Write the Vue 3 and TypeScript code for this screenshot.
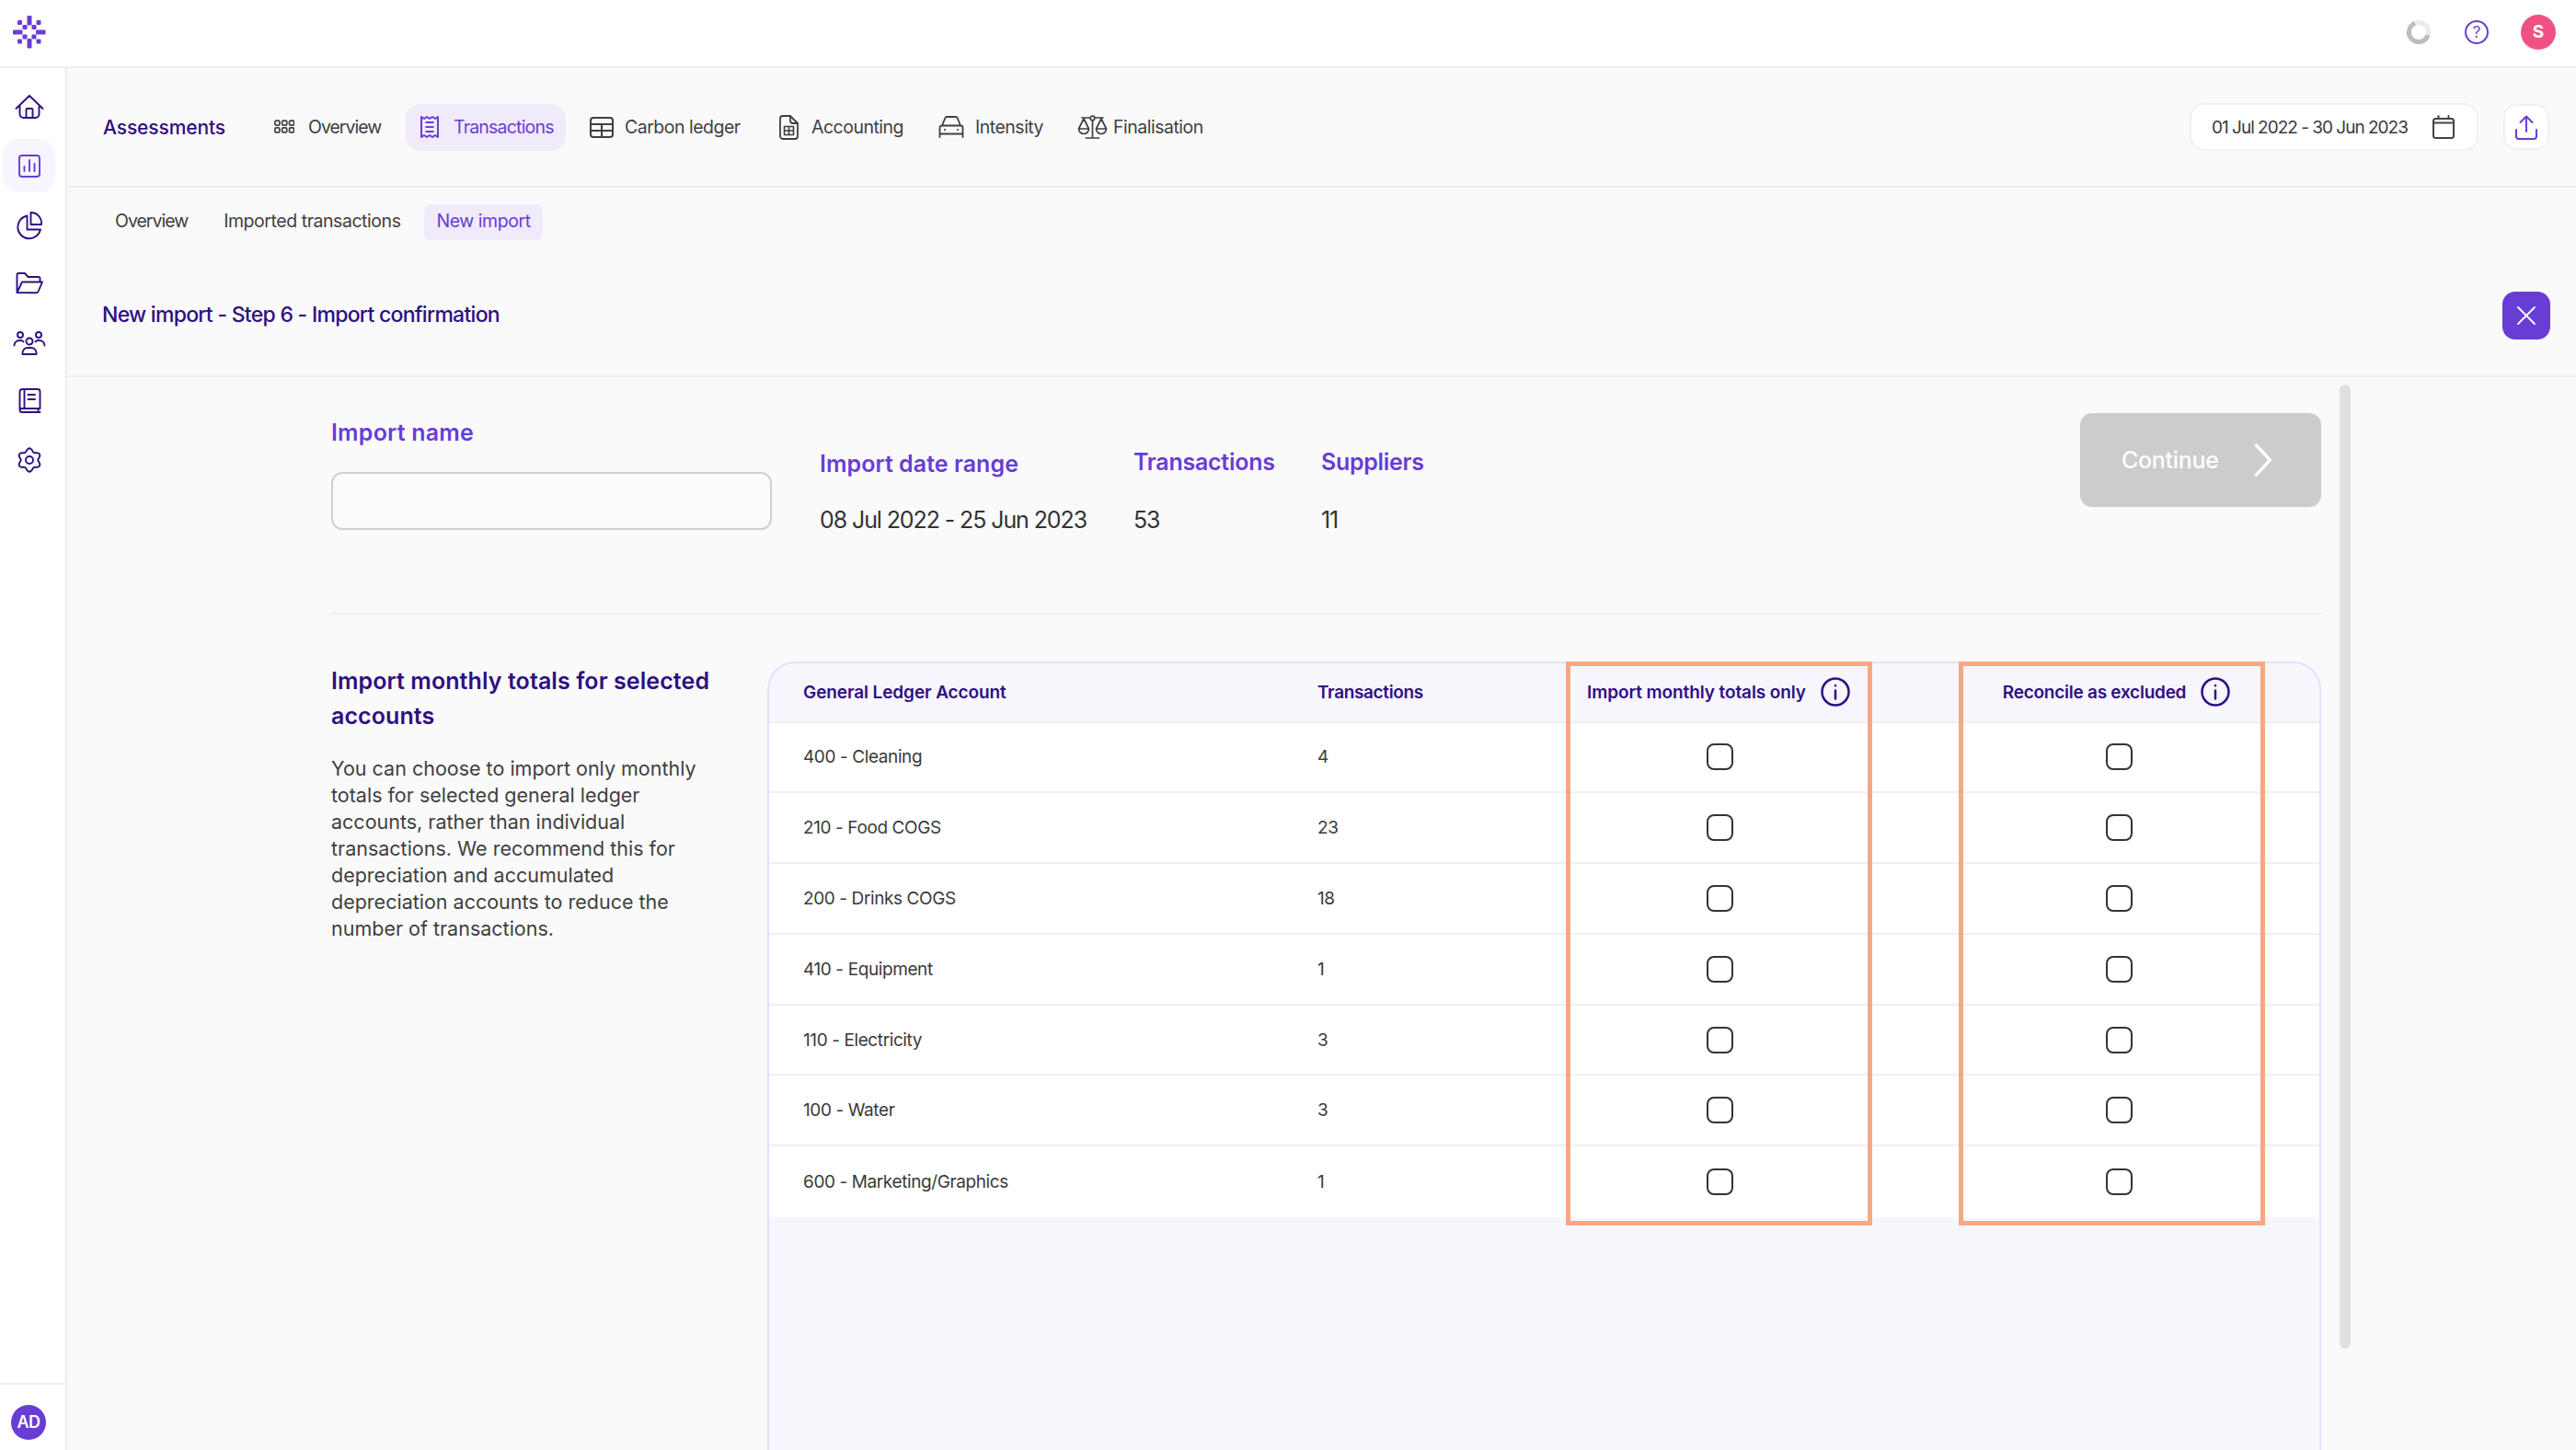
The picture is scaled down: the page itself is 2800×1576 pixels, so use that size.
<script setup lang="ts">
function gear(): string {
  const pts: string[] = []
  for (let i = 0; i < 96; i++) {
    const t = (i / 96) * Math.PI * 2
    const r = 11 - 1.7 * Math.cos(6 * t)
    pts.push(`${(18 + r * Math.cos(t)).toFixed(2)} ${(18 + r * Math.sin(t)).toFixed(2)}`)
  }
  return `M${pts.join('L')}ZM22 18a4 4 0 1 1-8 0a4 4 0 1 1 8 0Z`
}

const sideIcons = [
  { d: 'M3.5 20L18 6l14.5 14M7.5 16v10a4 4 0 0 0 4 4h13a4 4 0 0 0 4-4V16M14.5 30v-9a1 1 0 0 1 1-1h5a1 1 0 0 1 1 1v9', active: false },
  { d: 'M10 7h16a3 3 0 0 1 3 3v17a3 3 0 0 1-3 3H10a3 3 0 0 1-3-3V10a3 3 0 0 1 3-3ZM12.5 24v-5M18 24V12M23.5 24v-8', active: true },
  { d: 'M15.5 8.5A12.5 12.5 0 1 0 30 23.5H15.5ZM19.5 5A11.5 11.5 0 0 1 31 18H19.5Z', active: false },
  { d: 'M4.5 28V8.5A1.5 1.5 0 0 1 6 7h7l3.5 4H28a1.5 1.5 0 0 1 1.5 1.5V16M4.5 28L10 16.5h22L27.5 27a2 2 0 0 1-2 1.2Z', active: false },
  { d: 'M21.5 17a3.5 3.5 0 1 1-7 0a3.5 3.5 0 1 1 7 0ZM11 10a3 3 0 1 1-6 0a3 3 0 1 1 6 0ZM31 10a3 3 0 1 1-6 0a3 3 0 1 1 6 0ZM10.5 31h15v-1.5a5.5 5.5 0 0 0-5.5-5.5h-4a5.5 5.5 0 0 0-5.5 5.5ZM1.5 21.5a5.5 5.5 0 0 1 5.5-5.5h2.5l2 1.5M34.5 21.5A5.5 5.5 0 0 0 29 16h-2.5l-2 1.5', active: false },
  { d: 'M7.5 26.5V8a3 3 0 0 1 3-3H27a2.5 2.5 0 0 1 2.5 2.5V26H10a2.5 2.5 0 0 0-2.5 2A2.5 2.5 0 0 0 10 30h19.5M12.5 5v21M27.5 26v4M16.5 11H24M16.5 16H24', active: false },
  { d: gear(), active: false },
]

const rows = [
  { name: '400 - Cleaning', count: 4 },
  { name: '210 - Food COGS', count: 23 },
  { name: '200 - Drinks COGS', count: 18 },
  { name: '410 - Equipment', count: 1 },
  { name: '110 - Electricity', count: 3 },
  { name: '100 - Water', count: 3 },
  { name: '600 - Marketing/Graphics', count: 1 },
]

const overviewCells = [0, 8.5, 17].flatMap((x) => [0, 8.5].map((y) => ({ x: x + 1, y: y + 1 })))
</script>

<template>
  <div class="app">
    <header class="topbar">
      <svg class="logo" width="36" height="36" viewBox="0 0 36 36" fill="#673dd6">
        <rect x="15.5" y="0" width="5" height="10.5" rx="1" />
        <rect x="15.5" y="25" width="5" height="10.5" rx="1" />
        <rect x="0" y="15.5" width="10.5" height="5" rx="1" />
        <rect x="25" y="15.5" width="10.5" height="5" rx="1" />
        <rect x="5" y="5" width="5" height="5" rx="1" />
        <rect x="25.5" y="5" width="5" height="5" rx="1" />
        <rect x="5" y="25.5" width="5" height="5" rx="1" />
        <rect x="25.5" y="25.5" width="5" height="5" rx="1" />
        <rect x="10.5" y="10" width="5" height="5" rx="1" />
        <rect x="20.5" y="10" width="5" height="5" rx="1" />
        <rect x="10.5" y="20.5" width="5" height="5" rx="1" />
        <rect x="20.5" y="20.5" width="5" height="5" rx="1" />
      </svg>
      <div class="top-actions">
        <svg width="26" height="26" viewBox="0 0 26 26" fill="none" stroke-width="5">
          <circle cx="13" cy="13" r="10.5" stroke="#ebebeb" />
          <path d="M23 16.2A10.5 10.5 0 1 1 9 3.3" stroke="#bdbdbd" />
        </svg>
        <div class="help">?</div>
        <div class="user">S</div>
      </div>
    </header>

    <div class="body">
      <aside class="sidebar">
        <nav class="side-nav">
          <div v-for="(ic, i) in sideIcons" :key="i" class="side-item" :class="{ on: ic.active }">
            <svg width="36" height="36" viewBox="0 0 36 36" fill="none" stroke="currentColor" stroke-width="1.9" stroke-linecap="round" stroke-linejoin="round">
              <path :d="ic.d" />
            </svg>
          </div>
        </nav>
        <div class="side-foot"><div class="ad">AD</div></div>
      </aside>

      <main class="main">
        <div class="tabbar">
          <div class="brand">Assessments</div>
          <div class="tab t-overview">
            <svg width="22" height="16" viewBox="0 0 24 17" fill="none" stroke="currentColor" stroke-width="1.9">
              <rect v-for="(c, i) in overviewCells" :key="i" :x="c.x" :y="c.y" width="5.5" height="5.5" rx="1.6" />
            </svg>
            <span>Overview</span>
          </div>
          <div class="tab t-trans">
            <svg width="20" height="26" viewBox="0 0 20 26" fill="none" stroke="currentColor" stroke-width="2" stroke-linejoin="round">
              <path d="M1 2l3 2 3-2 3 2 3-2 3 2 3-2v22l-3-2-3 2-3-2-3 2-3-2-3 2ZM5.5 8h9M5.5 13h9M5.5 18h9" />
            </svg>
            <span>Transactions</span>
          </div>
          <div class="tab t-carbon">
            <svg width="26" height="23" viewBox="0 0 26 23" fill="none" stroke="currentColor" stroke-width="2">
              <rect x="1" y="1" width="24" height="21" rx="3" />
              <path d="M1 8h24M1 15h24M13 8v14" />
            </svg>
            <span>Carbon ledger</span>
          </div>
          <div class="tab t-acc">
            <svg width="21" height="27" viewBox="0 0 21 27" fill="none" stroke="currentColor" stroke-width="1.8" stroke-linejoin="round">
              <path d="M4 1h8l8 8v14a3 3 0 0 1-3 3H4a3 3 0 0 1-3-3V4a3 3 0 0 1 3-3ZM12 1v5a3 3 0 0 0 3 3h5" />
              <path d="M5.5 12.5h10v9h-10ZM5.5 17h10M10.5 12.5v9" stroke-width="1.6" />
            </svg>
            <span>Accounting</span>
          </div>
          <div class="tab t-int">
            <svg width="28" height="24" viewBox="0 0 28 24" fill="none" stroke="currentColor" stroke-width="1.8" stroke-linecap="round" stroke-linejoin="round">
              <path d="M1.5 23V12.5a2 2 0 0 1 2-2h21a2 2 0 0 1 2 2V23M1.5 19.5h25M4 10.5L7 3a2.5 2.5 0 0 1 2.3-2h9.4A2.5 2.5 0 0 1 21 3l3 7.5" />
              <path d="M7 15h.2M21 15h.2" stroke-width="2" />
            </svg>
            <span>Intensity</span>
          </div>
          <div class="tab t-fin">
            <svg width="33" height="26" viewBox="0 0 33 26" fill="none" stroke="currentColor" stroke-width="1.7" stroke-linecap="round" stroke-linejoin="round">
              <circle cx="16.5" cy="3.5" r="2.3" />
              <path d="M16.5 6v18.5M9.5 25h14M5 3h9M19 3h9M7 4L1.5 15h11ZM26 4l-5.5 11h11ZM1.5 15a5.5 5.5 0 0 0 11 0M20.5 15a5.5 5.5 0 0 0 11 0" />
            </svg>
            <span>Finalisation</span>
          </div>
          <div class="tab-right">
            <div class="date">
              <span>01 Jul 2022 - 30 Jun 2023</span>
              <svg width="24" height="26" viewBox="0 0 24 26" fill="none" stroke="#444" stroke-width="2" stroke-linecap="round">
                <rect x="1" y="4" width="22" height="21" rx="2.5" />
                <path d="M1 8.5h22M6.5 1v3M17.5 1v3" />
              </svg>
            </div>
            <div class="upload">
              <svg width="24" height="27" viewBox="0 0 24 27" fill="none" stroke="#673dd6" stroke-width="2" stroke-linecap="round" stroke-linejoin="round">
                <path d="M12 18V1.5M5.5 8L12 1.5 18.5 8M1 16v7a3 3 0 0 0 3 3h16a3 3 0 0 0 3-3v-7" />
              </svg>
            </div>
          </div>
        </div>

        <div class="subtabs">
          <div class="subtab s-ov">Overview</div>
          <div class="subtab">Imported transactions</div>
          <div class="subtab on">New import</div>
        </div>

        <div class="title-row">
          <h1>New import - Step 6 - Import confirmation</h1>
          <div class="close">
            <svg width="22" height="22" viewBox="0 0 22 22" fill="none" stroke="#fff" stroke-width="1.8" stroke-linecap="round">
              <path d="M2 2l18 18M20 2L2 20" />
            </svg>
          </div>
        </div>

        <div class="content">
          <div class="scrollthumb"></div>
          <section class="summary">
            <div class="name-col">
              <label class="label">Import name</label>
              <div class="input"></div>
            </div>
            <div class="meta m-date">
              <div class="label">Import date range</div>
              <div class="value">08 Jul 2022 - 25 Jun 2023</div>
            </div>
            <div class="meta m-tx">
              <div class="label">Transactions</div>
              <div class="value">53</div>
            </div>
            <div class="meta m-sup">
              <div class="label">Suppliers</div>
              <div class="value">11</div>
            </div>
            <div class="continue">
              <span>Continue</span>
              <svg width="20" height="36" viewBox="0 0 20 36" fill="none" stroke="#fff" stroke-width="3.4" stroke-linecap="round" stroke-linejoin="round">
                <path d="M2.5 2l15 16-15 16" />
              </svg>
            </div>
          </section>

          <section class="lower">
            <div class="intro">
              <h2>Import monthly totals for selected<br />accounts</h2>
              <p>
                You can choose to import only monthly<br />
                totals for selected general ledger<br />
                accounts, rather than individual<br />
                transactions. We recommend this for<br />
                depreciation and accumulated<br />
                depreciation accounts to reduce the<br />
                number of transactions.
              </p>
            </div>
            <div class="table">
              <div class="row head">
                <div>General Ledger Account</div>
                <div class="h-tx">Transactions</div>
                <div class="center">
                  <span>Import monthly totals only</span>
                  <svg class="info" width="32" height="32" viewBox="0 0 32 32" fill="none" stroke="currentColor" stroke-width="2.5" stroke-linecap="round">
                    <circle cx="16" cy="16" r="14.5" />
                    <path d="M16 14.5v9M16 9v.2" />
                  </svg>
                </div>
                <div class="center last">
                  <span class="h-rec">Reconcile as excluded</span>
                  <svg class="info" width="32" height="32" viewBox="0 0 32 32" fill="none" stroke="currentColor" stroke-width="2.5" stroke-linecap="round">
                    <circle cx="16" cy="16" r="14.5" />
                    <path d="M16 14.5v9M16 9v.2" />
                  </svg>
                </div>
              </div>
              <div v-for="r in rows" :key="r.name" class="row">
                <div>{{ r.name }}</div>
                <div>{{ r.count }}</div>
                <div class="center"><span class="check"></span></div>
                <div class="center last"><span class="check"></span></div>
              </div>
              <div class="mark mark-a"></div>
              <div class="mark mark-b"></div>
            </div>
          </section>
        </div>
      </main>
    </div>
  </div>
</template>

<style scoped>
.app {
  width: 2800px;
  height: 1576px;
  display: flex;
  flex-direction: column;
  overflow: hidden;
  background: #fafafa;
  font-family: Inter, "Liberation Sans", sans-serif;
  color: #3a3a3a;
}
.topbar {
  flex: none;
  height: 74px;
  box-sizing: border-box;
  background: #fff;
  border-bottom: 2px solid #eeeeee;
  display: flex;
  align-items: center;
  justify-content: space-between;
  padding: 0 22px 3px 14px;
}
.top-actions {
  display: flex;
  align-items: center;
  gap: 37px;
}
.help {
  width: 26px;
  height: 26px;
  box-sizing: border-box;
  border: 2px solid #673dd6;
  border-radius: 50%;
  color: #673dd6;
  font-size: 17px;
  line-height: 22px;
  text-align: center;
}
.user {
  width: 38px;
  height: 38px;
  border-radius: 50%;
  background: #ef5282;
  color: #fff;
  font-size: 19px;
  font-weight: 700;
  line-height: 38px;
  text-align: center;
  margin-left: -2px;
}
.body {
  flex: 1;
  display: flex;
  min-height: 0;
}
.sidebar {
  flex: none;
  width: 73px;
  box-sizing: border-box;
  background: #fff;
  border-right: 2px solid #eeeeee;
  display: flex;
  flex-direction: column;
  justify-content: space-between;
}
.side-nav {
  display: flex;
  flex-direction: column;
  gap: 6px;
  padding: 13px 0 0 3px;
}
.side-item {
  width: 57px;
  height: 58px;
  border-radius: 18px;
  display: flex;
  align-items: center;
  justify-content: center;
  color: #2f0f82;
}
.side-item.on {
  background: #f7f5fe;
  color: #673dd6;
}
.side-foot {
  height: 73px;
  box-sizing: border-box;
  border-top: 2px solid #eeeeee;
  display: flex;
  align-items: flex-start;
  padding: 22px 0 0 12px;
}
.ad {
  width: 38px;
  height: 38px;
  border-radius: 50%;
  background: #673dd6;
  color: #fff;
  font-size: 18px;
  font-weight: 600;
  line-height: 38px;
  text-align: center;
  letter-spacing: -0.5px;
}
.main {
  flex: 1;
  min-width: 0;
  display: flex;
  flex-direction: column;
}
.tabbar {
  flex: none;
  height: 130px;
  box-sizing: border-box;
  border-bottom: 2px solid #eeeeee;
  display: flex;
  align-items: center;
  padding: 0 29px 0 39px;
}
.brand {
  width: 186px;
  flex: none;
  color: #2f0f82;
  font-size: 21px;
  font-weight: 500;
  letter-spacing: -0.12px;
}
.tab {
  flex: none;
  box-sizing: border-box;
  height: 51px;
  display: flex;
  align-items: center;
  font-size: 19.5px;
  letter-spacing: -0.5px;
  color: #3f3f3f;
}
.t-overview { width: 143px; gap: 15px; letter-spacing: -1px; }
.t-trans {
  width: 174px;
  margin-right: 26px;
  gap: 16px;
  padding-left: 16px;
  border-radius: 16px;
  background: #f1eafb;
  color: #673dd6;
  letter-spacing: -0.8px;
}
.t-carbon { width: 206px; gap: 12px; }
.t-acc { width: 173px; gap: 14px; }
.t-int { width: 151px; gap: 12px; }
.t-fin { gap: 6px; }
.tab-right {
  margin-left: auto;
  display: flex;
  align-items: center;
  gap: 27px;
}
.date {
  width: 314px;
  height: 52px;
  box-sizing: border-box;
  background: #fff;
  border: 2px solid #f1f1f1;
  border-radius: 16px;
  display: flex;
  align-items: center;
  justify-content: space-between;
  padding: 0 24px 0 22px;
  font-size: 19px;
  letter-spacing: -1px;
  color: #3a3a3a;
}
.upload {
  width: 50px;
  height: 50px;
  box-sizing: border-box;
  background: #fff;
  border: 2px solid #f1f1f1;
  border-radius: 14px;
  display: flex;
  align-items: center;
  justify-content: center;
}
.subtabs {
  flex: none;
  display: flex;
  gap: 13px;
  padding: 18px 0 0 39px;
}
.subtab {
  height: 39px;
  line-height: 37px;
  padding: 0 13px;
  border-radius: 6px;
  font-size: 19.5px;
  letter-spacing: -0.45px;
  color: #3f3f3f;
}
.subtab.s-ov {
  letter-spacing: -1px;
}
.subtab.on {
  background: #f1eafb;
  color: #673dd6;
}
.title-row {
  flex: none;
  display: flex;
  align-items: center;
  justify-content: space-between;
  padding: 56px 28px 39px 39px;
  border-bottom: 2px solid #eeeeee;
}
h1 {
  margin: -3px 0 0 -1px;
  font-size: 23px;
  font-weight: 500;
  letter-spacing: -0.72px;
  color: #2f0f82;
}
.close {
  width: 52px;
  height: 52px;
  border-radius: 14px;
  background: #673dd6;
  display: flex;
  align-items: center;
  justify-content: center;
}
.content {
  flex: 1;
  min-height: 0;
  position: relative;
  overflow: hidden;
  padding: 0 277px 0 287px;
}
.scrollthumb {
  position: absolute;
  left: 2470px;
  top: 8px;
  width: 12px;
  height: 1048px;
  border-radius: 6px;
  background: #e0e0e0;
}
.summary {
  height: 258px;
  box-sizing: border-box;
  border-bottom: 2px solid #eeeeee;
  display: flex;
  align-items: flex-start;
  padding-top: 39px;
}
.label {
  display: block;
  font-size: 25px;
  font-weight: 600;
  line-height: 32px;
  letter-spacing: 0.05px;
  color: #673dd6;
}
.name-col {
  width: 532px;
  flex: none;
  margin-top: 5px;
}
.name-col .label {
  letter-spacing: 0.2px;
}
.input {
  width: 479px;
  height: 63px;
  box-sizing: border-box;
  margin-top: 27px;
  border: 2px solid #cfcfcf;
  border-radius: 12px;
  background: #fcfcfc;
}
.meta {
  flex: none;
}
.m-date { width: 340px; margin-top: 39px; margin-left: -1px; }
.m-tx { width: 204px; margin-top: 37px; margin-left: 1px; }
.m-sup { margin-top: 37px; }
.m-tx .label { letter-spacing: -0.25px; }
.m-sup .label { letter-spacing: -0.3px; }
.value {
  font-size: 25px;
  line-height: 32px;
  letter-spacing: -1.1px;
  color: #333;
}
.m-date .value { margin-top: 29px; }
.m-tx .value, .m-sup .value { margin-top: 31px; }
.continue {
  margin-left: auto;
  width: 262px;
  height: 102px;
  box-sizing: border-box;
  border-radius: 13px;
  background: #cccccc;
  color: #fff;
  display: flex;
  align-items: center;
  gap: 38px;
  padding-left: 45px;
  font-size: 25px;
  font-weight: 500;
  letter-spacing: -0.3px;
}
.lower {
  display: flex;
  margin-top: 51px;
}
.intro {
  width: 474px;
  flex: none;
}
h2 {
  margin: 2px 0 0;
  font-size: 25px;
  font-weight: 600;
  line-height: 38px;
  letter-spacing: 0.08px;
  color: #2f0f82;
}
p {
  margin: 24px 0 0;
  font-size: 21.5px;
  line-height: 29px;
  letter-spacing: 0;
  color: #3f3f3f;
}
.table {
  position: relative;
  flex: 1;
  min-height: 900px;
  box-sizing: border-box;
  background: #f7f6fd;
  border: 2px solid #e6def9;
  border-bottom: none;
  border-radius: 30px 30px 0 0;
}
.row {
  display: grid;
  grid-template-columns: 559px 270px 335px 1fr;
  align-items: center;
  box-sizing: border-box;
  height: 76.8px;
  padding-left: 37px;
  background: #fff;
  border-bottom: 2px solid #f0f0f0;
  font-size: 19px;
  letter-spacing: -0.4px;
  color: #3a3a3a;
}
.row:nth-last-child(3) {
  border-bottom: none;
}
.row.head {
  height: 64.5px;
  background: #f7f6fd;
  border-radius: 30px 30px 0 0;
  color: #2f0f82;
  font-weight: 600;
  letter-spacing: -0.1px;
}
.h-tx {
  letter-spacing: -0.35px;
}
.h-rec {
  letter-spacing: -0.25px;
}
.center {
  display: flex;
  align-items: center;
  justify-content: center;
}
.last {
  padding-left: 49px;
}
.head .center {
  padding-right: 3px;
}
.head .last {
  padding-left: 46px;
}
.info {
  flex: none;
  margin-left: 16px;
}
.check {
  width: 29px;
  height: 29px;
  box-sizing: border-box;
  border: 2px solid #333;
  border-radius: 8px;
  background: #fff;
}
.mark {
  position: absolute;
  top: -2px;
  width: 333px;
  height: 613px;
  box-sizing: border-box;
  border: 5px solid #f4a985;
  pointer-events: none;
}
.mark-a { left: 866px; }
.mark-b { left: 1293px; }
</style>

<style>
html, body {
  margin: 0;
  background: #fafafa;
  overflow: hidden;
}
</style>
